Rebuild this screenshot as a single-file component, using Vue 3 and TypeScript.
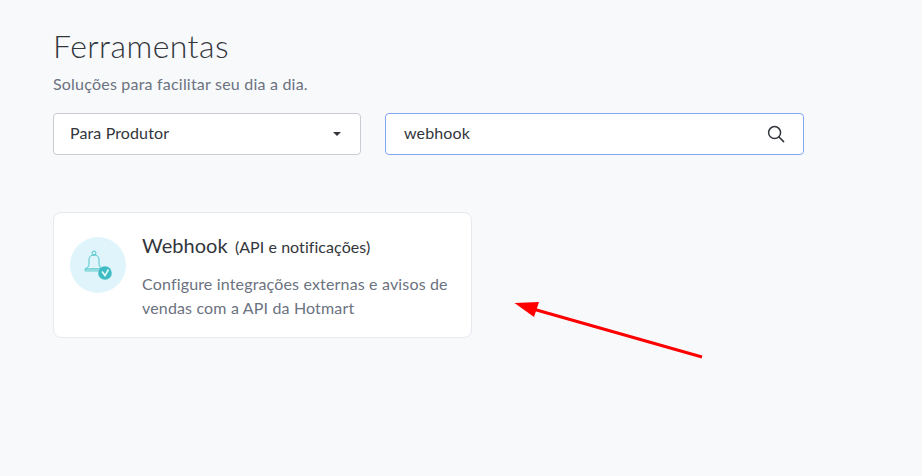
<script setup lang="ts">
const title = 'Ferramentas'
</script>

<template>
  <main class="page">
    <h1 class="title">{{ title }}</h1>
    <p class="subtitle">Soluções para facilitar seu dia a dia.</p>
    <div class="filters">
      <div class="select">
        <span>Para Produtor</span>
        <i class="caret"></i>
      </div>
      <div class="search">
        <span>webhook</span>
        <svg width="18" height="18" viewBox="0 0 18 18" fill="none" stroke="#32363b" stroke-width="1.5" stroke-linecap="round">
          <circle cx="7.6" cy="7.6" r="6" />
          <path d="M12 12l4.6 4.6" />
        </svg>
      </div>
    </div>
    <article class="card">
      <div class="avatar">
        <svg width="32" height="32" viewBox="0 0 32 32" fill="none">
          <circle cx="12" cy="4" r="2" stroke="#4fc5cb" stroke-width="1" />
          <path d="M7 15.500V10.500C7 7.700 9 6 12 6s5 1.700 5 4.500V15.500c0 2 2 3.500 4 4.500H3c2-1 4-2.500 4-4.500z" stroke="#4fc5cb" stroke-width="1" />
          <path d="M3 20H21V22H3z" fill="#bfe9ec" stroke="#4fc5cb" stroke-width=".8" />
          <circle cx="23" cy="24" r="6.800" fill="#3fbcc4" />
          <path d="M20 22.500l3 4 3.500-6" stroke="#e8fafb" stroke-width="1.600" />
        </svg>
      </div>
      <div class="body">
        <h2 class="name">Webhook <small>(API e notificações)</small></h2>
        <p class="desc">Configure integrações externas e avisos de vendas com a API da Hotmart</p>
      </div>
    </article>
    <svg class="arrow" width="220" height="85" viewBox="0 0 220 85">
      <path d="M202 72L26 22" stroke="#ff0000" stroke-width="3" />
      <path d="M14.500 18L39 17L34 32z" fill="#ff0000" />
    </svg>
  </main>
</template>

<style scoped>
.page {
  position: relative;
  box-sizing: border-box;
  height: 476px;
  padding: 27px 0 0 53px;
  overflow: hidden;
  background: #f8f9fb;
  font-family: "Lato", "Noto Sans", sans-serif;
  color: #32363b;
}
.title {
  margin: 0;
  font-size: 32px;
  font-weight: 300;
  letter-spacing: 0.45px;
  line-height: 38px;
}
.subtitle {
  margin: 7px 0 0;
  font-size: 16px;
  line-height: 24px;
  letter-spacing: 0.21px;
  color: #6b7280;
}
.filters {
  display: flex;
  gap: 24px;
  margin-top: 17px;
}
.select,
.search {
  box-sizing: border-box;
  display: flex;
  align-items: center;
  justify-content: space-between;
  height: 42px;
  background: #fff;
  border-radius: 4px;
  font-size: 16px;
  letter-spacing: 0.12px;
}
.select span,
.search span {
  margin-bottom: 3px;
}
.select {
  width: 308px;
  padding: 0 19px 0 16px;
  border: 1px solid #c9ccd2;
}
.search {
  width: 419px;
  padding: 0 18px 0 18px;
  border: 1px solid #7fa6f5;
}
.caret {
  width: 0;
  height: 0;
  margin-bottom: 1px;
  border-left: 4.500px solid transparent;
  border-right: 4.500px solid transparent;
  border-top: 4px solid #32363b;
}
.card {
  box-sizing: border-box;
  display: flex;
  gap: 16px;
  width: 419px;
  height: 126px;
  margin-top: 57px;
  padding: 24px 16px 0;
  background: #fff;
  border: 1px solid #e6e9ee;
  border-radius: 8px;
}
.avatar {
  flex: none;
  display: flex;
  align-items: center;
  justify-content: center;
  width: 56px;
  height: 56px;
  background: #e0f5fb;
  border-radius: 50%;
}
.name {
  margin: -4px 0 0;
  font-size: 20px;
  font-weight: 400;
  letter-spacing: 0.05px;
  line-height: 24px;
}
.name small {
  margin-left: 2px;
  font-size: 16px;
  letter-spacing: 0.06px;
}
.desc {
  margin: 13px 0 0;
  font-size: 16px;
  line-height: 24px;
  letter-spacing: 0.16px;
  color: #6b7280;
}
.arrow {
  position: absolute;
  left: 500px;
  top: 285px;
}
</style>
